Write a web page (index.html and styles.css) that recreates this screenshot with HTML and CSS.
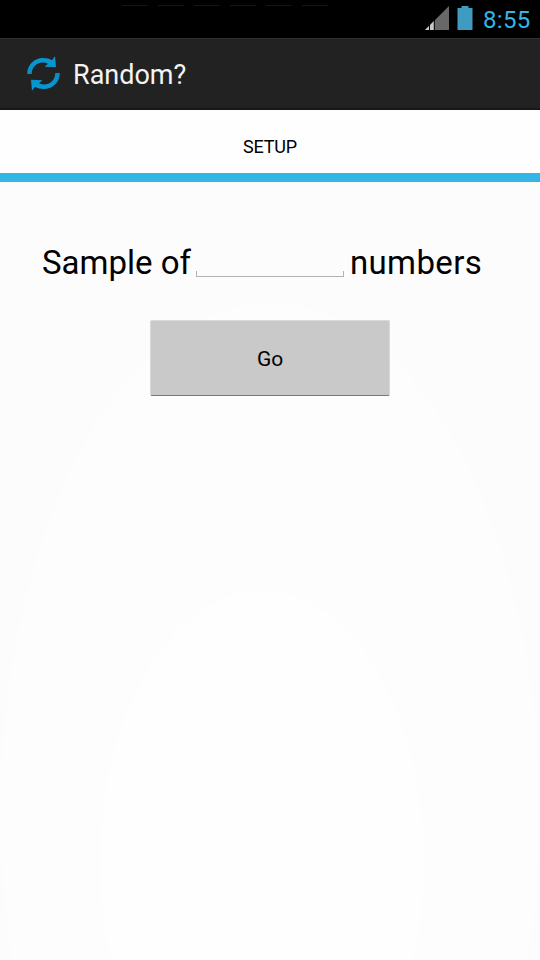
FILE: index.html
```
<!DOCTYPE html>
<html lang="en">
<head>
<meta charset="utf-8">
<title>Random?</title>
<link rel="stylesheet" href="styles.css">
</head>
<body>
<div class="status-bar">
  <div class="notifications"><i></i><i></i><i></i><i></i><i></i><i></i></div>
  <svg class="signal" width="24" height="24" viewBox="0 0 24 24"><path d="M24 0V24H0Z" fill="#686868"/><path d="M9 15V24H0Z" fill="#c9c9c9"/><path d="M4.500 18V24M9.300 13V24" stroke="#000" stroke-width="1"/></svg>
  <svg class="battery" width="16" height="24" viewBox="0 0 16 24"><path d="M4.500 0H11.500V2H15.500V24H.5V2H4.500Z" fill="#409bc0"/></svg>
  <span class="clock">8:55</span>
</div>
<header class="action-bar">
  <svg class="logo" width="34" height="36" viewBox="0 0 34 36">
    <defs><linearGradient id="blue" x2="0" y2="1"><stop offset="0" stop-color="#079bd5"/><stop offset="1" stop-color="#078dc5"/></linearGradient></defs>
    <g fill="url(#blue)">
      <path d="M.2 18C.2 8.500 7.500 2 16 2C19.500 2 22.500 2.800 25 4.200L28 .2L29 11.200L17.500 10.800L21 7.800C13.500 3.800 4.800 9 4.700 18Z"/>
      <path d="M.2 18C.2 8.500 7.500 2 16 2C19.500 2 22.500 2.800 25 4.200L28 .2L29 11.200L17.500 10.800L21 7.800C13.500 3.800 4.800 9 4.700 18Z" transform="rotate(180 16.500 17.500)"/>
    </g>
  </svg>
  <h1>Random?</h1>
</header>
<nav class="tabs"><span>SETUP</span></nav>
<main>
  <div class="sample-row"><span class="before">Sample of</span><span class="field"></span><span class="after">numbers</span></div>
  <button class="go"><span>Go</span></button>
</main>
</body>
</html>
```
FILE: styles.css
```
* { box-sizing: border-box; }
body {
  margin: 0;
  height: 960px;
  overflow: hidden;
  display: flex;
  flex-direction: column;
  font-family: Roboto, sans-serif;
  color: #000;
  background: #fdfdfd;
}
.status-bar {
  height: 38px;
  flex: none;
  display: flex;
  align-items: flex-start;
  background: #000;
}
.notifications { display: flex; gap: 10px; padding: 5px 0 0 122px; width: 425px; }
.notifications i { width: 26px; height: 1px; background: #151515; }
.signal { margin-top: 6px; }
.battery { margin: 6px 0 0 8px; }
.clock { margin: 5px 0 0 10px; font-size: 24px; line-height: 30px; letter-spacing: .3px; color: #33b5e5; }
.action-bar {
  height: 72px;
  flex: none;
  display: flex;
  align-items: center;
  padding-left: 27px;
  background: #222;
  border-top: 1px solid #303030;
  border-bottom: 2px solid #181818;
}
h1 { margin: 2px 0 0 12px; font-size: 27px; font-weight: 400; line-height: 36px; color: #f3f3f3; }
.tabs {
  height: 72px;
  flex: none;
  display: flex;
  justify-content: center;
  padding-top: 26px;
  font-size: 18px;
  line-height: 22px;
  letter-spacing: -.2px;
  background: #fefefe;
  border-bottom: 9px solid #33b5e5;
}
main {
  flex: 1;
  background:
    radial-gradient(ellipse 162px 272px at 262px 680px, #fefefe 99.500%, transparent 100%),
    radial-gradient(ellipse 270px 510px at 270px 630px, #fdfdfd 99.500%, transparent 100%),
    #fcfcfc;
}
.sample-row { display: flex; height: 42px; margin: 60px 0 0 42px; font-size: 33px; line-height: 42px; }
.before { width: 154px; }
.field { width: 148px; height: 6px; margin-top: 29px; border: 1px solid #b2b2b2; border-top: 0; }
.after { margin-left: 6px; letter-spacing: .35px; }
.go {
  display: block;
  width: 240px;
  height: 76px;
  margin: 36px auto 0;
  padding: 1px 0 0;
  font: 21px/24px Roboto, sans-serif;
  letter-spacing: -.2px;
  color: #000;
  background: #c9c9c9;
  border: 1px solid #d9d9d9;
  border-bottom-color: #777;
  border-radius: 2px;
}
```
